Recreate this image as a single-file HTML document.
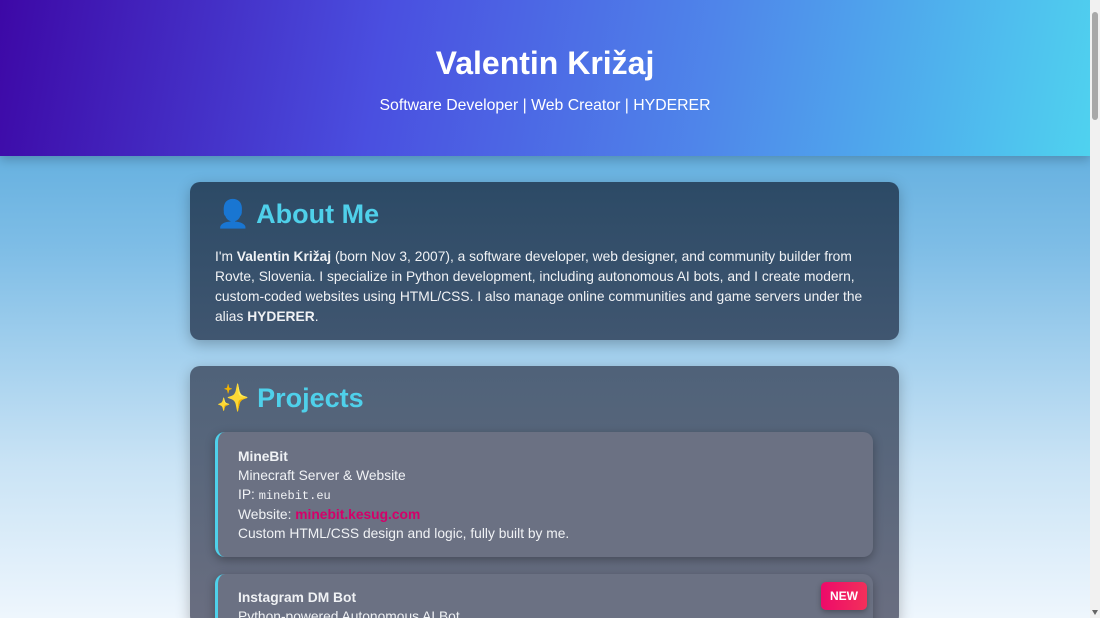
<!DOCTYPE html>
<html><head><meta charset="utf-8"><style>
html,body{margin:0;padding:0;width:1100px;height:618px;overflow:hidden;font-family:"Liberation Sans",sans-serif;}
body{background:linear-gradient(180deg,#3f9dd6 0%,#7ebde6 40%,#c9e3f5 75%,#eef6fd 100%);position:relative;}
.sb{position:absolute;right:0;top:0;width:10px;height:618px;background:#f1f1f1;}
.sb .th{position:absolute;left:2px;top:12px;width:6px;height:108px;background:#a8a8a8;border-radius:3px;}
.sb .dn{position:absolute;left:2px;bottom:3px;width:0;height:0;border-left:3px solid transparent;border-right:3px solid transparent;border-top:5px solid #666;}
header{position:absolute;left:0;top:0;width:1090px;height:156px;background:linear-gradient(100deg,#3d08a6 0%,#4a4fe0 35%,#4f86ea 65%,#4fd2ef 100%);color:#fff;text-align:center;box-shadow:0 4px 10px rgba(0,0,0,.2);}
header h1{margin:0;padding-top:44px;font-size:32px;font-weight:bold;line-height:38px;}
header p{margin:15px 0 0;font-size:15.8px;}
.card{position:absolute;left:190px;width:709px;border-radius:10px;box-shadow:0 4px 14px rgba(0,0,0,.25);color:#f0f2f5;}
.about{top:182px;height:158px;background:linear-gradient(180deg,#2c4a66,#405670);}
.proj{top:366px;height:260px;background:linear-gradient(180deg,#4f6279,#6a6e80);}
h2{margin:0;position:absolute;left:26px;font-size:27px;color:#4fd0ea;font-weight:bold;}
.txt{position:absolute;left:25px;top:65px;width:660px;font-size:13.8px;line-height:20px;}
.item{position:absolute;left:25px;width:655px;background:#6b7183;border-left:3px solid #4fd0ea;border-radius:10px;box-shadow:0 3px 10px rgba(0,0,0,.3);font-size:13.8px;line-height:19.2px;}
.item .in{padding:15px 0 0 20px;}
code{font-family:"Liberation Mono",monospace;font-size:12px;line-height:1;}
a{color:#d4006a;font-weight:bold;text-decoration:none;}
.new{position:absolute;right:6px;top:8px;background:linear-gradient(90deg,#ee0a6a,#f2305a);color:#fff;font-weight:bold;font-size:12px;line-height:14px;padding:7px 9px;border-radius:5px;box-shadow:0 2px 6px rgba(0,0,0,.3);}
</style></head><body>
<header><h1>Valentin Križaj</h1><p>Software Developer | Web Creator | HYDERER</p></header>
<div class="card about">
<h2 style="top:16px">👤 About Me</h2>
<div class="txt">I'm <b>Valentin Križaj</b> (born Nov 3, 2007), a software developer, web designer, and community builder from Rovte, Slovenia. I specialize in Python development, including autonomous AI bots, and I create modern, custom-coded websites using HTML/CSS. I also manage online communities and game servers under the alias <b>HYDERER</b>.</div>
</div>
<div class="card proj">
<h2 style="top:16px">✨ Projects</h2>
<div class="item" style="top:66px;height:125px"><div class="in"><b>MineBit</b><br>Minecraft Server &amp; Website<br>IP: <code>minebit.eu</code><br>Website: <a>minebit.kesug.com</a><br>Custom HTML/CSS design and logic, fully built by me.</div></div>
<div class="item" style="top:208px;height:80px"><div class="in" style="padding-top:14px"><b>Instagram DM Bot</b><br>Python-powered Autonomous AI Bot</div><div class="new">NEW</div></div>
</div>
<div class="sb"><div class="th"></div><div class="dn"></div></div>
</body></html>
